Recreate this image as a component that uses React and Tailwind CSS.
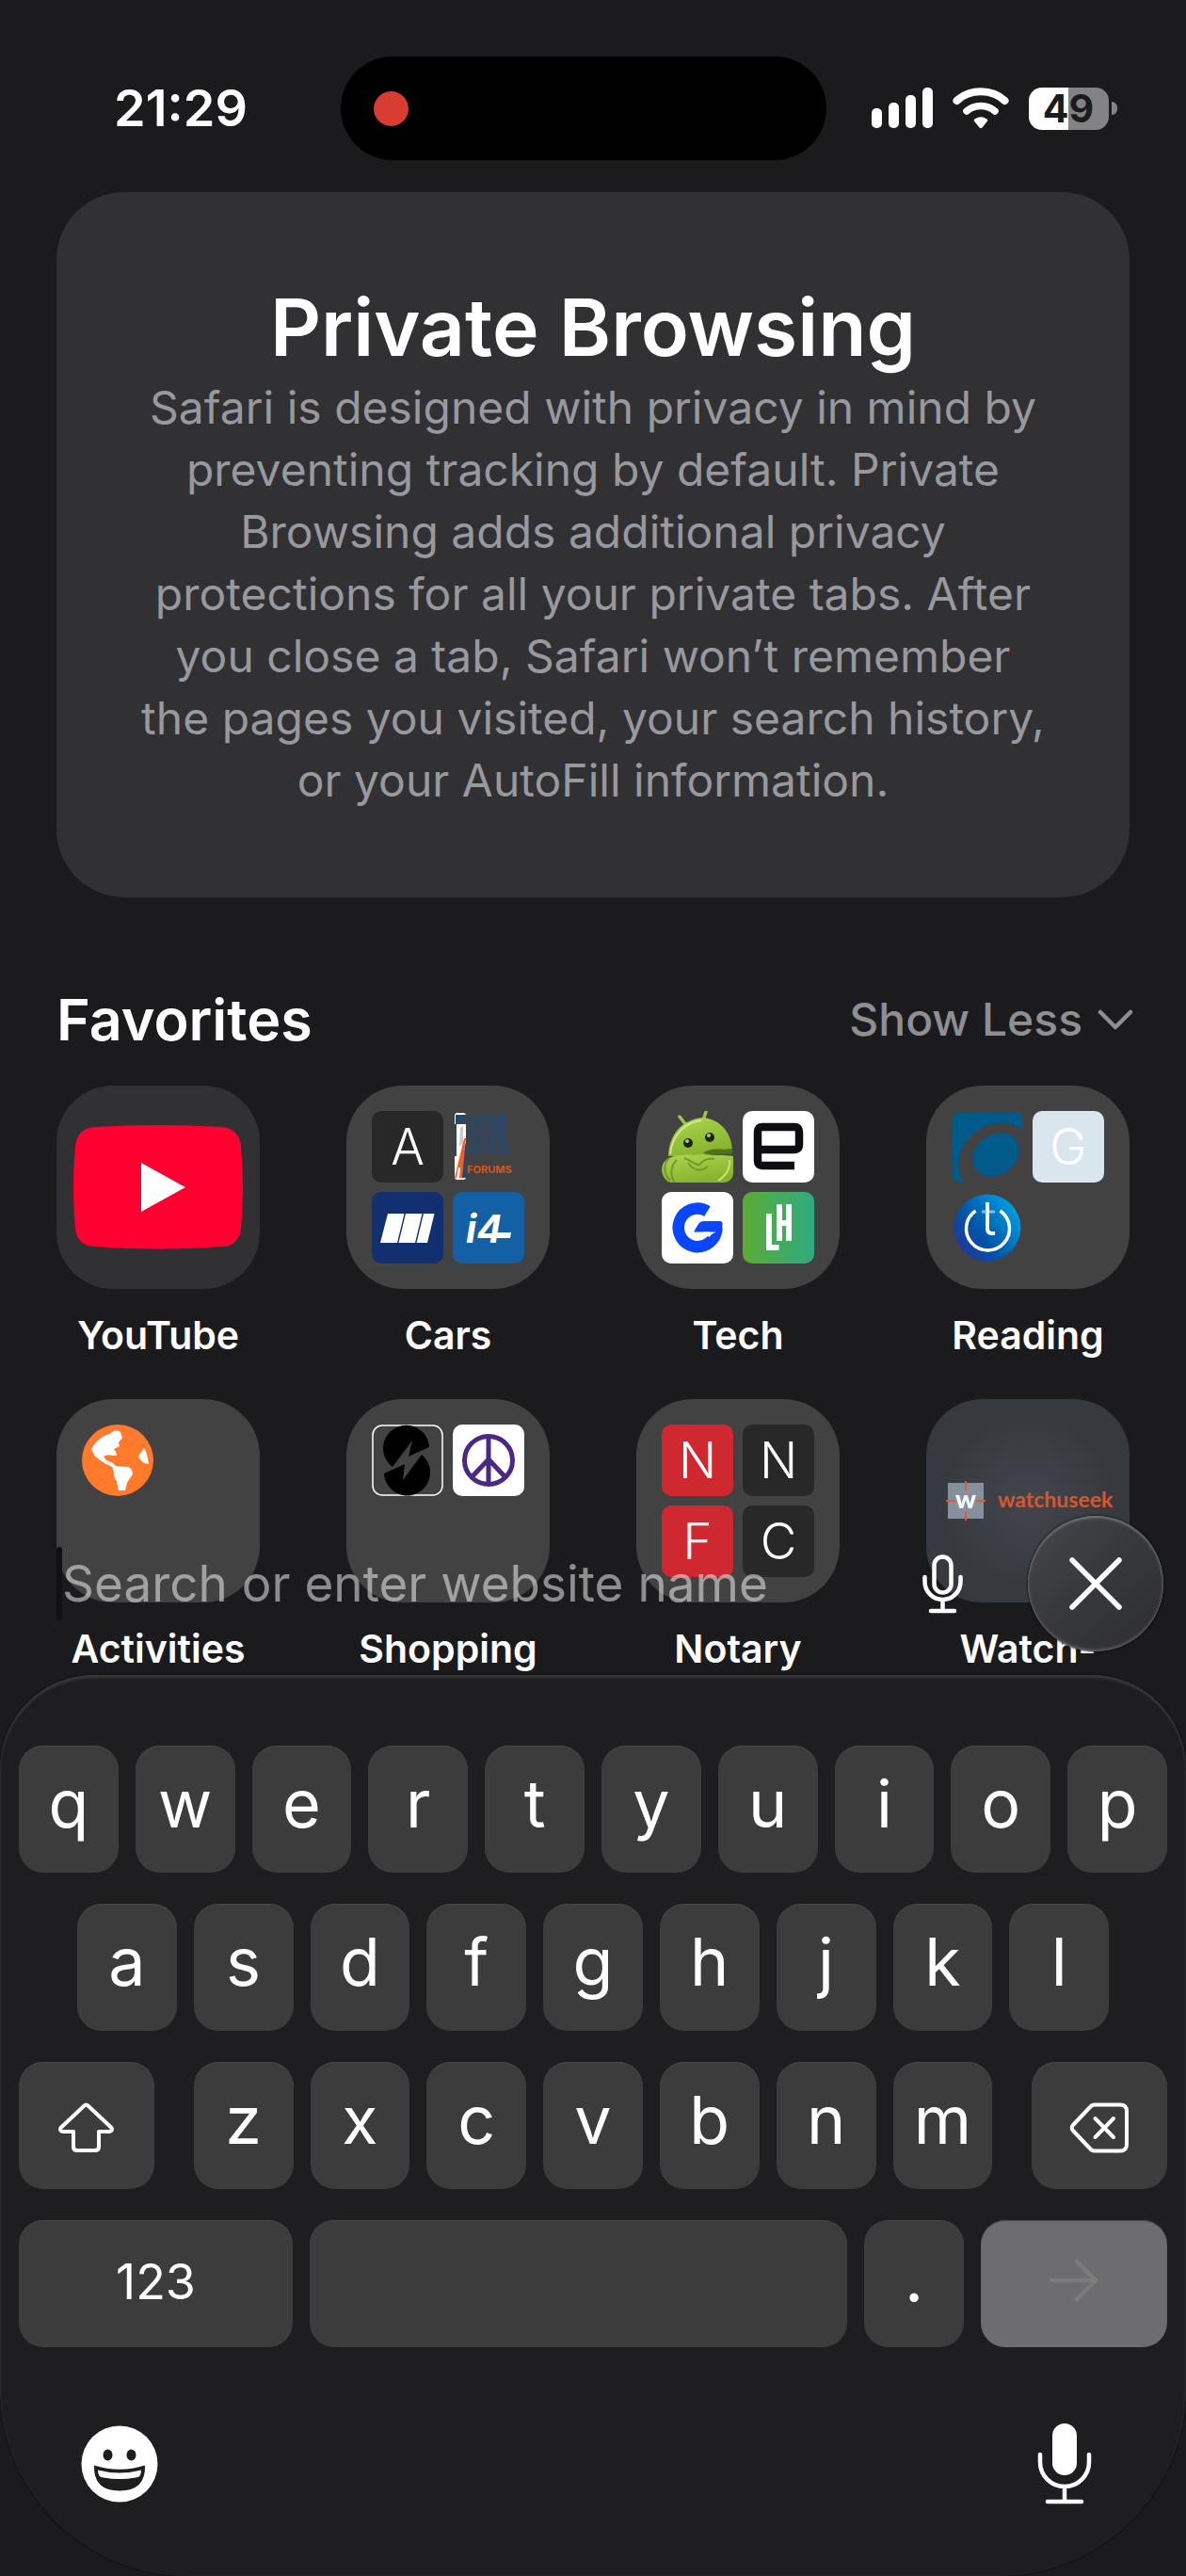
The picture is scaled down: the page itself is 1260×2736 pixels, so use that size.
import React from "react";

/* ---------- status bar ---------- */

function Signal() {
  return (
    <svg width="65" height="44" viewBox="0 0 65 44" fill="#fff" aria-hidden="true">
      <rect x="0" y="22" width="11" height="21" rx="5" />
      <rect x="18" y="16" width="11" height="27" rx="5" />
      <rect x="36" y="8" width="11" height="35" rx="5" />
      <rect x="54" y="0" width="11" height="43" rx="5" />
    </svg>
  );
}

function Wifi() {
  return (
    <svg width="60" height="44" viewBox="0 0 60 44" fill="none" stroke="#fff" strokeLinecap="round" aria-hidden="true">
      <path d="M4.500 14 C18 1 42 1 55.500 14" strokeWidth="8" />
      <path d="M15 25 C23 17.500 37 17.500 45 25" strokeWidth="7.500" />
      <path d="M22.500 35 C26 30 34 30 37.500 35 L31.500 42.500 Q30 44 28.500 42.500 Z" fill="#fff" stroke="none" />
    </svg>
  );
}

function Battery() {
  return (
    <div className="flex items-center gap-[3px]">
      <div className="flex h-[45px] w-[85px] items-center justify-center rounded-[14px] bg-linear-to-r from-white from-49% to-[#838385] to-49% text-[41px] leading-none font-bold text-[#1b1b1d]">
        49
      </div>
      <div className="h-[14px] w-[6px] rounded-r-full bg-[#838385]" />
    </div>
  );
}

/* ---------- small site icons, 76 x 76 ---------- */

function Mini({ children }) {
  return (
    <svg viewBox="0 0 76 76" className="block w-full" aria-hidden="true">
      {children}
    </svg>
  );
}

const letterStyles = {
  dark: "bg-[#282828] text-white",
  red: "bg-[#cf2830] text-white",
  pale: "bg-[#dae6ee] text-white",
};

function Letter({ children, tone }) {
  return (
    <div className={`flex aspect-square w-full items-center justify-center rounded-[10px] text-[53px] leading-none font-light ${letterStyles[tone]}`}>
      {children}
    </div>
  );
}

function AutopiaIcon() {
  return (
    <Mini>
      <rect x="2" y="2" width="12" height="71" rx="3" fill="#fff" />
      <rect x="3" y="4" width="11" height="10" fill="#2b4768" />
      <path d="M10 40 L14 34 V71 H10 Z" fill="#2b4768" />
      <rect x="2" y="14" width="2" height="34" fill="#2b4768" />
      <path d="M8 18 L11 16 V34 L7 38 Z" fill="#c9ccd0" />
      <path d="M2 71 L12 29 L14 29 L10 71 H7 L8 60 H6 L4 71 Z" fill="#f0602a" />
      <g stroke="#2b4768" strokeWidth="2.500" fill="none">
        <path d="M18 45 L20 4 L22 45 M25 4 V41 Q27 47 29 41 V4 M31 5 H36 M33.500 4 V45 M38 8 Q40 1 42 8 V41 Q40 48 38 41 Z M45 45 V5 H48 V25 H45 M51 4 V45 M53 45 L54 4 L56 45 M58 38 v7" />
      </g>
      <text x="15" y="66" fontSize="11" fontWeight="700" fill="#d4571f">FORUMS</text>
    </Mini>
  );
}

function StripesIcon() {
  return (
    <Mini>
      <rect width="76" height="76" rx="10" fill="#123070" />
      <g fill="#fff">
        <path d="M17 23 H34.500 L27 54 H9 Z" />
        <path d="M36 23 H53.500 L46 54 H28.500 Z" />
        <path d="M55 23 H66.500 L59 54 H47.500 Z" />
      </g>
    </Mini>
  );
}

function I4Icon() {
  return (
    <Mini>
      <rect width="76" height="76" rx="10" fill="#1460a4" />
      <text x="14" y="54" fontSize="41" fontWeight="700" fontStyle="italic" fill="#fff">i4</text>
      <path d="M44 43 H62 L61 49 H43 Z" fill="#fff" />
    </Mini>
  );
}

function AndroidIcon() {
  return (
    <Mini>
      <defs>
        <linearGradient id="droid" x1="0" y1="0" x2="0.400" y2="1">
          <stop offset="0" stopColor="#b0d651" />
          <stop offset="1" stopColor="#86b32d" />
        </linearGradient>
        <clipPath id="droidClip"><rect width="76" height="76" rx="10" /></clipPath>
      </defs>
      <g clipPath="url(#droidClip)">
        <path d="M26 15 L19 6 M44 10 L47 1" stroke="#9cc63f" strokeWidth="3.500" strokeLinecap="round" />
        <path d="M7 48 C8 24 22 9 44 7 C62 9 74 22 75 42 C66 45 56 46 46 48 Z" fill="url(#droid)" />
        <path d="M9 46 C11 24 26 12 42 10" stroke="#cfe98a" strokeWidth="2" fill="none" />
        <path d="M44 45 C52 38 64 42 75 40 V45 C65 47 54 47 44 45 Z" fill="#4f7417" />
        <path d="M8 50 C20 44 34 48 42 46 C54 48 68 46 76 48 V76 H8 C-2 70 -3 55 8 50 Z" fill="url(#droid)" />
        <path d="M8 50 C1 56 2 68 9 74 M14 76 C8 68 10 58 16 52 M24 50 C30 52 36 58 40 57 C44 52 50 50 56 51 M28 55 C33 62 40 66 49 59" stroke="#6f9a2a" strokeWidth="2" fill="none" />
        <path d="M60 74 C69 68 73 60 72 52" stroke="#c6e273" strokeWidth="2" fill="none" />
        <circle cx="28" cy="34" r="5" fill="#1b2410" />
        <circle cx="27" cy="32" r="2" fill="#b8bdb0" />
        <circle cx="51" cy="28" r="5" fill="#1b2410" />
        <circle cx="50" cy="26" r="2" fill="#b8bdb0" />
      </g>
    </Mini>
  );
}

function EngadgetIcon() {
  return (
    <Mini>
      <rect width="76" height="76" rx="10" fill="#fff" />
      <path d="M55 58 H21 Q16 58 16 53 V22 Q16 17 21 17 H55 Q60 17 60 22 V36 Q60 41 55 41 H16" fill="none" stroke="#0e0b12" strokeWidth="8.500" />
    </Mini>
  );
}

function BlueGIcon() {
  return (
    <Mini>
      <rect width="76" height="76" rx="10" fill="#fff" />
      <path d="M48.500 20.500 A20.300 20.300 0 1 0 58.300 38" fill="none" stroke="#0a45ff" strokeWidth="12.500" />
      <path d="M34 42.500 L39 34 Q41 31 45 31 H62 Q64.500 31 64.500 34 L64 42 L57 42.500 Z" fill="#0a45ff" />
      <path d="M44 42.500 H58 Q53 44 50.500 48 Z" fill="#fff" />
    </Mini>
  );
}

function LifehackerIcon() {
  return (
    <Mini>
      <defs>
        <linearGradient id="lh" x1="0" x2="1">
          <stop offset="0" stopColor="#5cab35" />
          <stop offset="1" stopColor="#2eab80" />
        </linearGradient>
      </defs>
      <rect width="76" height="76" rx="10" fill="url(#lh)" />
      <path d="M28 23 V59 H38.500 M39 13 V52 M49 13 V52 M39 33 H49" fill="none" stroke="#fff" strokeWidth="6" />
    </Mini>
  );
}

function RingIcon() {
  return (
    <Mini>
      <defs><clipPath id="ringClip"><rect x="1" y="1" width="74" height="74" rx="7" /></clipPath></defs>
      <g clipPath="url(#ringClip)">
        <rect width="76" height="76" fill="#005b8b" />
        <ellipse cx="47" cy="51" rx="42" ry="36" transform="rotate(-38 47 51)" fill="#424242" />
        <ellipse cx="47" cy="46.500" rx="26.500" ry="21" transform="rotate(-35 47 46.500)" fill="#005b8b" />
      </g>
    </Mini>
  );
}

function PowerTIcon() {
  return (
    <Mini>
      <defs>
        <linearGradient id="pt" x1="0" y1="0.900" x2="0.900" y2="0.200">
          <stop offset="0" stopColor="#2b2f95" />
          <stop offset="0.450" stopColor="#0055a8" />
          <stop offset="1" stopColor="#009ce0" />
        </linearGradient>
      </defs>
      <circle cx="38" cy="38" r="35.500" fill="url(#pt)" />
      <path d="M25.500 20 A23 23 0 1 0 51.500 20" fill="none" stroke="#fff" strokeWidth="3.500" />
      <path d="M38 11 V39 Q38 44 43 44 H46" fill="none" stroke="#fff" strokeWidth="4" />
      <path d="M32 21 H37 M40 21 H46" stroke="#7fc4ee" strokeWidth="3" />
    </Mini>
  );
}

function GlobeIcon() {
  return (
    <Mini>
      <circle cx="38" cy="38" r="38" fill="#ff7a2d" />
      <g fill="#fff">
        <path d="M31 9 Q36 4 41 8 L43 14 L39 19 L40 23 L34 26 Q37 29 37 33 L32 33 Q27 31 23 34 L26 38 L33 41 L36 44 L49 45 Q54 47 54 53 Q50 58 48 62 L46 70 H39 L37 60 Q33 56 34 50 L32 45 L24 41 L14 34 L10 26 Q15 17 22 13 Z" />
        <path d="M66 25 Q69 28 71 42 Q63 41 60 34 Z" />
      </g>
    </Mini>
  );
}

function BoltSIcon() {
  return (
    <Mini>
      <rect x="1" y="1" width="74" height="74" rx="10" fill="none" stroke="#fff" strokeWidth="1.500" />
      <path d="M61 24 A24.500 24.500 0 1 0 22 45 L43 17 L39 34 Z" fill="#000" />
      <path d="M53 32 A24.500 24.500 0 1 1 13 52 L35 42 L33 59 Z" fill="#000" />
    </Mini>
  );
}

function PeaceIcon() {
  return (
    <Mini>
      <rect width="76" height="76" rx="10" fill="#fff" />
      <g fill="none" stroke="#4a2883" strokeWidth="5">
        <circle cx="38" cy="38" r="25.500" />
        <path d="M38 12 V64 M38 37 L20 56 M38 37 L56 56" />
      </g>
    </Mini>
  );
}

/* ---------- favorites ---------- */

function YouTubeArt() {
  return (
    <svg viewBox="0 0 216 216" className="block w-full" aria-hidden="true">
      <path d="M40 44 Q108 40 176 44 Q194 46 196 64 Q200 108 196 152 Q194 170 176 171 Q108 176 40 171 Q22 170 20 152 Q16 108 20 64 Q22 46 40 44 Z" fill="#ff0030" />
      <path d="M90 82 L137 108 L90 134 Z" fill="#fff" />
    </svg>
  );
}

function WatchArt() {
  return (
    <svg viewBox="0 0 216 216" className="block w-full" aria-hidden="true">
      <rect x="23" y="89" width="38" height="38" fill="#85909c" />
      <text x="42" y="116" textAnchor="middle" fontSize="27" fontWeight="900" fill="#fff" fontFamily="Lato, sans-serif">w</text>
      <path d="M42 87 V97 M42 119 V129 M21 108 H31 M53 108 H63" stroke="#e0592b" strokeWidth="2" />
      <text x="76" y="115" fontSize="23" fontWeight="700" fill="#d4572d" fontFamily="Lato, sans-serif">watchuseek</text>
    </svg>
  );
}

const favorites = [
  { name: "YouTube", art: <YouTubeArt />, tile: "bg-[#313133]" },
  { name: "Cars", items: [<Letter tone="dark">A</Letter>, <AutopiaIcon />, <StripesIcon />, <I4Icon />] },
  { name: "Tech", items: [<AndroidIcon />, <EngadgetIcon />, <BlueGIcon />, <LifehackerIcon />] },
  { name: "Reading", items: [<RingIcon />, <Letter tone="pale">G</Letter>, <PowerTIcon />] },
  { name: "Activities", items: [<GlobeIcon />] },
  { name: "Shopping", items: [<BoltSIcon />, <PeaceIcon />] },
  {
    name: "Notary",
    items: [<Letter tone="red">N</Letter>, <Letter tone="dark">N</Letter>, <Letter tone="red">F</Letter>, <Letter tone="dark">C</Letter>],
  },
  { name: "Watch-", art: <WatchArt />, tile: "bg-radial from-[#43454e] to-[#363a3e] to-60%" },
];

function Favorite({ name, art, items, tile = "bg-[#424242]" }) {
  return (
    <a href="#" className="flex flex-col gap-6 text-center text-[41px] leading-[50px] font-semibold">
      <div className={`aspect-square overflow-hidden rounded-[60px] ${tile}`}>
        {art || (
          <div className="grid grid-cols-2 gap-[10px] p-[27px]">
            {items.map((item, i) => (
              <div key={i}>{item}</div>
            ))}
          </div>
        )}
      </div>
      {name}
    </a>
  );
}

/* ---------- search bar ---------- */

function SearchBar() {
  return (
    <div className="absolute right-6 bottom-[25px] left-[60px] flex items-center">
      <span className="h-[78px] w-[6px] rounded-full bg-[#111112]" />
      <input
        aria-label="Search or enter website name"
        placeholder="Search or enter website name"
        className="min-w-0 flex-1 bg-transparent text-[53px] leading-[78px] text-white outline-none placeholder:text-white/50"
      />
      <button aria-label="Dictate search">
        <svg width="43" height="63" viewBox="0 0 43 63" fill="none" stroke="#fff" strokeWidth="4.500" strokeLinecap="round">
          <rect x="12.500" y="2.500" width="18" height="38" rx="9" />
          <path d="M2.500 24 V29 A19 19 0 0 0 40.500 29 V24 M21.500 49 V59 M9 60 H34" />
        </svg>
      </button>
      <button
        aria-label="Close"
        className="ml-[69px] flex size-36 items-center justify-center rounded-full bg-linear-to-br from-[#47474b] via-[#36383b] to-[#2e2e30] shadow-[inset_0_2px_3px_#77777b,inset_0_-2px_3px_#5c5c60,0_0_3px_#000]"
      >
        <svg width="56" height="56" viewBox="0 0 56 56" stroke="#fff" strokeWidth="5.500" strokeLinecap="round">
          <path d="M3 3 L53 53 M53 3 L3 53" />
        </svg>
      </button>
    </div>
  );
}

/* ---------- keyboard ---------- */

function Key({ children, className = "", tone = "bg-[#3c3c3d]", ...rest }) {
  return (
    <button
      className={`flex h-[135px] items-center justify-center rounded-[26px] text-[70px] leading-none text-white shadow-[inset_0_1px_1px_#48484a] ${tone} ${className}`}
      {...rest}
    >
      {children}
    </button>
  );
}

function LetterKeys({ letters }) {
  return [...letters].map((l) => (
    <Key key={l} className="col-span-2 pb-3">
      {l}
    </Key>
  ));
}

function ShiftIcon() {
  return (
    <svg width="60" height="54" viewBox="0 0 60 54" fill="none" stroke="#fff" strokeWidth="4" strokeLinejoin="round" aria-hidden="true">
      <path d="M27.500 3.500 Q29.500 1.500 31.500 3.500 L56.500 27 Q58 30.500 54 31 H43 V47 Q43 51 39 51 H20 Q16 51 16 47 V31 H5 Q1 30.500 2.500 27 Z" />
    </svg>
  );
}

function DeleteIcon() {
  return (
    <svg width="64" height="54" viewBox="0 0 64 54" fill="none" stroke="#fff" strokeWidth="4" strokeLinecap="round" strokeLinejoin="round" aria-hidden="true">
      <path d="M27 2.500 H54 Q61 2.500 61 9.500 V44.500 Q61 51.500 54 51.500 H27 Q24 51.500 22 49 L4 30 Q1.500 27 4 24 L22 5 Q24 2.500 27 2.500 Z" />
      <path d="M27.500 17 L47 37 M47 17 L27.500 37" />
    </svg>
  );
}

function Keyboard() {
  return (
    <section
      aria-label="Keyboard"
      className="flex flex-1 flex-col gap-[33px] rounded-t-[100px] rounded-b-[200px] bg-[#1e1e20] px-5 pt-[75px] shadow-[inset_0_3px_3px_#3a3a3c,inset_0_0_2px_#303032,0_0_2px_#000]"
    >
      <div className="grid grid-cols-20 gap-[18px]">
        <LetterKeys letters="qwertyuiop" />
      </div>
      <div className="grid grid-cols-20 gap-[18px]">
        <span />
        <LetterKeys letters="asdfghjkl" />
      </div>
      <div className="grid grid-cols-20 gap-[18px]">
        <Key aria-label="Shift" className="col-span-3 mr-6 pt-1">
          <ShiftIcon />
        </Key>
        <LetterKeys letters="zxcvbnm" />
        <Key aria-label="Delete" className="col-span-3 ml-6 pt-1">
          <DeleteIcon />
        </Key>
      </div>
      <div className="flex gap-[18px]">
        <Key className="w-[291px] pb-1">
          <span className="text-[52px]">123</span>
        </Key>
        <Key aria-label="Space" className="flex-1" />
        <Key className="w-[106px] pb-3">.</Key>
        <Key aria-label="Go" tone="bg-[#6d6d70]" className="w-[198px] pb-2">
          <svg width="54" height="46" viewBox="0 0 54 46" fill="none" stroke="#7b7b7c" strokeWidth="4.500" strokeLinecap="round" strokeLinejoin="round" aria-hidden="true">
            <path d="M3 23 H50 M30 3 L50 23 L30 43" />
          </svg>
        </Key>
      </div>
      <div className="flex items-center justify-between px-[66px] pt-[48px] pb-[72px]">
        <button aria-label="Emoji">
          <svg width="82" height="82" viewBox="0 0 82 82">
            <circle cx="41" cy="41" r="40.500" fill="#fff" />
            <ellipse cx="28.500" cy="31.500" rx="5" ry="6" fill="#1e1e20" />
            <ellipse cx="53.500" cy="31.500" rx="5" ry="6" fill="#1e1e20" />
            <path d="M14 42.500 Q41 51 68 42.500 Q69 69.500 41 69.500 Q13 69.500 14 42.500 Z" fill="#1e1e20" />
            <path d="M18 47.500 Q41 53.500 64 47.500 Q64 55.500 58 55.500 Q41 58.500 24 55.500 Q18 55.500 18 47.500 Z" fill="#fff" />
          </svg>
        </button>
        <button aria-label="Dictate" className="mr-[14px]">
          <svg width="58" height="86" viewBox="0 0 58 86" fill="none" stroke="#fff" strokeWidth="4.500" strokeLinecap="round">
            <rect x="16" y="0" width="26" height="55" rx="13" fill="#fff" stroke="none" />
            <path d="M3 33 V41 A26 26 0 0 0 55 41 V33 M29 67 V82 M11 83 H47" />
          </svg>
        </button>
      </div>
    </section>
  );
}

/* ---------- page ---------- */

export default function App() {
  return (
    <div className="flex min-h-screen flex-col bg-[#1b1b1d] font-['Inter',sans-serif] text-white">
      <div className="relative pb-[3px]">
        <header className="grid grid-cols-[1fr_516px_1fr] items-center pt-[60px] pr-5 pb-[34px]">
          <time className="pl-[22px] text-center text-[54px] leading-none font-semibold">21:29</time>
          <div className="flex h-[110px] items-center rounded-full bg-black px-[35px]">
            <span className="size-[37px] rounded-full bg-[#d93c30]" />
          </div>
          <div className="flex items-center justify-center gap-[21px] pr-[6px]">
            <Signal />
            <Wifi />
            <Battery />
          </div>
        </header>

        <main className="px-[60px]">
          <section className="rounded-[72px] bg-[#313133] pt-[92px] pb-[91px] text-center">
            <h1 className="text-[84px] leading-[104px] font-semibold">Private Browsing</h1>
            <p className="text-[48px] leading-[66px] text-[#98989f]">
              Safari is designed with privacy in mind by
              <br />
              preventing tracking by default. Private
              <br />
              Browsing adds additional privacy
              <br />
              protections for all your private tabs. After
              <br />
              you close a tab, Safari won’t remember
              <br />
              the pages you visited, your search history,
              <br />
              or your AutoFill information.
            </p>
          </section>

          <section className="mt-[90px]">
            <div className="mb-[30px] flex items-center justify-between leading-[80px]">
              <h2 className="text-[61px] font-semibold">Favorites</h2>
              <button className="-mr-1 flex items-center gap-4 text-[48px] font-medium text-[#8e8e93]">
                Show Less
                <svg width="38" height="22" viewBox="0 0 38 22" fill="none" stroke="#8e8e93" strokeWidth="4.500" strokeLinecap="round" strokeLinejoin="round" aria-hidden="true">
                  <path d="M3 3 L19 19 L35 3" />
                </svg>
              </button>
            </div>
            <div className="grid grid-cols-4 gap-x-[92px] gap-y-[43px]">
              {favorites.map((f) => (
                <Favorite key={f.name} {...f} />
              ))}
            </div>
          </section>
        </main>

        <SearchBar />
      </div>
      <Keyboard />
    </div>
  );
}
